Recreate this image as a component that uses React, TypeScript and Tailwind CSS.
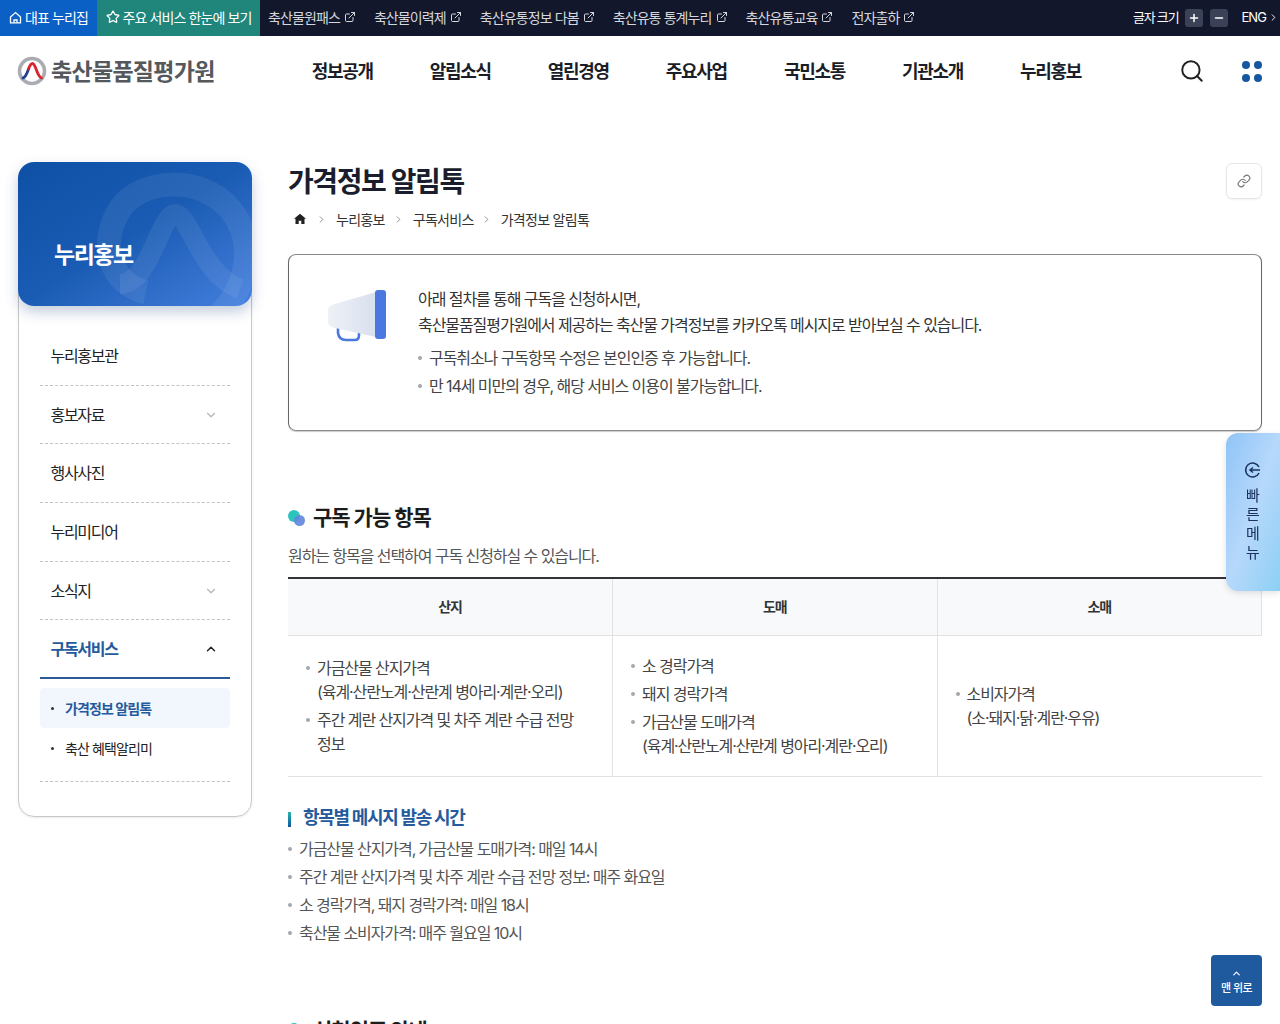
import { ChevronDown, ChevronRight, ChevronUp, ExternalLink, Link, Plus, Minus, Search, Star } from "lucide-react";

const font = "font-['Inter','Noto_Sans_CJK_KR',sans-serif]";

const topLinks = ["축산물원패스", "축산물이력제", "축산유통정보 다봄", "축산유통 통계누리", "축산유통교육", "전자출하"];
const navItems = ["정보공개", "알림소식", "열린경영", "주요사업", "국민소통", "기관소개", "누리홍보"];

const Logo = () => (
    <svg width="30" height="30" viewBox="0 0 30 30" fill="none">
        <circle cx="15" cy="15" r="12.5" stroke="#a9acb0" strokeWidth="3.6" />
        <path d="M6 22 C9 21 10 17 11.5 13" stroke="#233f94" strokeWidth="2.8" strokeLinecap="round" />
        <path d="M11.5 13 C13 9 14 7.500 15.500 7.500 C17 7.500 18 10 19.500 14 C21 18.500 22 21 24.500 22" stroke="#d8262f" strokeWidth="2.8" strokeLinecap="round" />
    </svg>
);

const Bullet = ({ children, top = "top-[10px]" }: { children: React.ReactNode; top?: string }) => (
    <li className="relative pl-[11px]">
        <span className={`absolute left-0 ${top} w-[4px] h-[4px] rounded-full bg-[#a3a8ae]`}></span>
        {children}
    </li>
);

const SectionTitle = ({ children, className }: { children: React.ReactNode; className: string }) => (
    <div className={`${className} flex items-center h-[32px]`}>
        <span className="relative w-[17px] h-[16px] mr-[8px]">
            <span className="absolute left-0 top-0 w-[12px] h-[12px] rounded-full bg-[#2cc5bd]"></span>
            <span className="absolute left-[6px] top-[5px] w-[11px] h-[11px] rounded-full bg-[#5f86dd]/90"></span>
        </span>
        <h3 className="text-[21px] font-bold text-[#1c1c1c] tracking-[-1px]">{children}</h3>
    </div>
);

const SideItem = ({ label, arrow }: { label: string; arrow?: boolean }) => (
    <div className="h-[58.7px] flex items-center justify-between pl-[10.5px] pr-[12px] border-b border-dashed border-[#c4c4c4] text-[16px] text-[#222] tracking-[-1.3px]">
        <span>{label}</span>
        {arrow && <ChevronDown size={14} strokeWidth={2} className="text-[#b5b5b5]" />}
    </div>
);

const Sidebar = () => (
    <aside className="w-[234px] shrink-0">
        <div className="relative h-[144px] rounded-[16px] overflow-hidden bg-gradient-to-br from-[#0d50a4] via-[#1a5cb4] to-[#4480df] shadow-[0_6px_14px_rgba(20,60,120,0.25)] z-10 flex items-center">
            <svg className="absolute left-[72px] top-[2px]" width="170" height="150" viewBox="0 0 170 150" fill="none">
                <path d="M56 128 C20 120 8 80 30 45 C50 15 110 10 140 45 C165 75 160 120 130 150" stroke="#ffffff" strokeOpacity="0.07" strokeWidth="24" />
                <path d="M30 120 C60 120 70 50 85 50 C100 50 110 110 150 125" stroke="#ffffff" strokeOpacity="0.07" strokeWidth="20" />
            </svg>
            <h2 className="relative pl-[36px] text-[23px] font-bold text-white tracking-[-1.5px] pt-[42px]">누리홍보</h2>
        </div>
        <div className="-mt-[14px] h-[525px] border border-[#c8c8c8] rounded-b-[16px] px-[21px] pt-[34px] shadow-[0_1px_2px_rgba(0,0,0,0.08)]">
            <SideItem label="누리홍보관" />
            <SideItem label="홍보자료" arrow />
            <SideItem label="행사사진" />
            <SideItem label="누리미디어" />
            <SideItem label="소식지" arrow />
            <div className="h-[58.7px] flex items-center justify-between pl-[10.5px] pr-[12px] border-b-2 border-[#2b5a97] text-[16px] font-bold text-[#255a9d] tracking-[-1.3px]">
                <span>구독서비스</span>
                <ChevronUp size={14} strokeWidth={2.5} className="text-[#222]" />
            </div>
            <ul className="pt-[9px] pb-[13px] border-b border-dashed border-[#c4c4c4] text-[14px] tracking-[-0.9px]">
                <li className="h-[40px] flex items-center gap-[11px] pl-[11px] bg-[#f2f7fd] rounded-[4px] font-bold text-[#255a9d]">
                    <span className="w-[3px] h-[3px] rounded-full bg-[#333]"></span>가격정보 알림톡
                </li>
                <li className="h-[40px] flex items-center gap-[11px] pl-[11px] text-[#222]">
                    <span className="w-[3px] h-[3px] rounded-full bg-[#333]"></span>축산 혜택알리미
                </li>
            </ul>
        </div>
    </aside>
);

const Megaphone = () => (
    <svg width="60" height="54" viewBox="0 0 60 54">
        <defs>
            <linearGradient id="horn" x1="0" y1="0" x2="1" y2="0">
                <stop offset="0" stopColor="#eef1f6" />
                <stop offset="1" stopColor="#d8e0ee" />
            </linearGradient>
        </defs>
        <path d="M10 38 L10 43 Q11 50 18 50 L27 50 Q31 50 31 45 L31 42" fill="none" stroke="#4a78e0" strokeWidth="2.6" strokeLinecap="round" />
        <path d="M7 14 L48 2 L48 47 L7 38 Q0 37 0 31 L0 20 Q0 15 7 14 Z" fill="url(#horn)" />
        <rect x="47" y="0" width="11" height="49" rx="3" fill="#4a78e0" />
    </svg>
);

const Main = () => (
    <main className="flex-1 min-w-0">
        <div className="flex justify-between items-start">
            <h1 className="mt-[2px] text-[28px] leading-[36px] font-bold text-[#1a1d2b] tracking-[-1.4px]">가격정보 알림톡</h1>
            <button className="mt-px w-[36px] h-[36px] rounded-[6px] border border-[#e6e6e6] flex items-center justify-center text-[#777] shadow-[0_1px_2px_rgba(0,0,0,0.05)]">
                <Link size={14} />
            </button>
        </div>
        <nav className="mt-[9px] flex items-center h-[20px] text-[14px] text-[#333] tracking-[-0.7px]">
            <svg width="12" height="12" viewBox="0 0 12 12" className="ml-[6px] mr-[10px]"><path d="M6 .8 L12 5.800 L10.500 5.800 L10.500 11 L7.300 11 L7.300 7.800 L4.700 7.800 L4.700 11 L1.500 11 L1.500 5.800 L0 5.800 Z" fill="#222" /></svg>
            <ChevronRight size={11} className="text-[#888] mr-[9px]" />
            <span>누리홍보</span>
            <ChevronRight size={11} className="text-[#888] ml-[8px] mr-[9px]" />
            <span>구독서비스</span>
            <ChevronRight size={11} className="text-[#888] ml-[7px] mr-[9px]" />
            <span>가격정보 알림톡</span>
        </nav>
        <section className="mt-[25px] h-[177px] rounded-[8px] border border-[#666] border-t-[#8a8a8a] border-b-[#8a8a8a] flex shadow-[0_1px_1px_rgba(0,0,0,0.2)]">
            <div className="w-[129px] shrink-0 pl-[39px] pt-[35px]"><Megaphone /></div>
            <div className="pt-[31px] text-[16px] leading-[26px] text-[#333] tracking-[-1.07px]">
                <p>아래 절차를 통해 구독을 신청하시면,</p>
                <p>축산물품질평가원에서 제공하는 축산물 가격정보를 카카오톡 메시지로 받아보실 수 있습니다.</p>
                <ul className="mt-[6px] leading-[28px] text-[#444]">
                    <Bullet top="top-[12px]">구독취소나 구독항목 수정은 본인인증 후 가능합니다.</Bullet>
                    <Bullet top="top-[12px]">만 14세 미만의 경우, 해당 서비스 이용이 불가능합니다.</Bullet>
                </ul>
            </div>
        </section>
        <SectionTitle className="mt-[71px]">구독 가능 항목</SectionTitle>
        <p className="mt-[9px] text-[16px] leading-[26px] text-[#555] tracking-[-1.07px]">원하는 항목을 선택하여 구독 신청하실 수 있습니다.</p>
        <table className="mt-[8px] w-full table-fixed border-t-2 border-[#333] text-[16px] tracking-[-1.07px] text-[#444]">
            <thead>
                <tr className="h-[57px] bg-[#f8f9fb] text-[14px] font-bold text-[#333] border-b border-[#e2e2e2]">
                    <th className="border-r border-[#e2e2e2]">산지</th>
                    <th className="border-r border-[#e2e2e2]">도매</th>
                    <th className="border-r border-[#e2e2e2]">소매</th>
                </tr>
            </thead>
            <tbody>
                <tr className="h-[141px] border-b border-[#e2e2e2] leading-[24px] break-keep">
                    <td className="border-r border-[#e2e2e2] pl-[18px] pr-[30px]">
                        <ul className="space-y-[4px]">
                            <Bullet>가금산물 산지가격<br />(육계·산란노계·산란계 병아리·계란·오리)</Bullet>
                            <Bullet>주간 계란 산지가격 및 차주 계란 수급 전망 정보</Bullet>
                        </ul>
                    </td>
                    <td className="border-r border-[#e2e2e2] pl-[18px] pr-[20px]">
                        <ul className="space-y-[4px]">
                            <Bullet>소 경락가격</Bullet>
                            <Bullet>돼지 경락가격</Bullet>
                            <Bullet>가금산물 도매가격<br />(육계·산란노계·산란계 병아리·계란·오리)</Bullet>
                        </ul>
                    </td>
                    <td className="pl-[18px] pr-[20px]">
                        <ul>
                            <Bullet>소비자가격<br />(소·돼지·닭·계란·우유)</Bullet>
                        </ul>
                    </td>
                </tr>
            </tbody>
        </table>
        <div className="mt-[27px] flex items-center h-[28px]">
            <span className="w-[3px] h-[15px] mt-[3px] bg-gradient-to-b from-[#2bb5a8] to-[#17569f] mr-[12px]"></span>
            <h4 className="text-[18px] font-bold text-[#255a9d] tracking-[-1.3px]">항목별 메시지 발송 시간</h4>
        </div>
        <ul className="mt-[3px] text-[16px] leading-[28px] text-[#555] tracking-[-1.07px]">
            <Bullet top="top-[12px]">가금산물 산지가격, 가금산물 도매가격: 매일 14시</Bullet>
            <Bullet top="top-[12px]">주간 계란 산지가격 및 차주 계란 수급 전망 정보: 매주 화요일</Bullet>
            <Bullet top="top-[12px]">소 경락가격, 돼지 경락가격: 매일 18시</Bullet>
            <Bullet top="top-[12px]">축산물 소비자가격: 매주 월요일 10시</Bullet>
        </ul>
        <SectionTitle className="mt-[68px]">신청인증 안내</SectionTitle>
    </main>
);

export default function App() {
    return (
        <div className={`${font} h-[1024px] overflow-hidden bg-white`}>
            <div className="h-[36px] bg-[#12172b] flex items-center text-[14px] tracking-[-0.9px]">
                <a className="h-full w-[97px] pb-[2px] bg-[#0a60c5] text-white flex items-center justify-center gap-[3px]">
                    <svg width="13" height="13" viewBox="0 0 13 13" fill="none" stroke="#fff" strokeWidth="1.300"><path d="M1.500 6 L6.500 1.500 L11.500 6 L11.500 11.800 L1.500 11.800 Z" /><path d="M5 11.800 V9 H8 V11.800" /></svg>
                    대표 누리집
                </a>
                <a className="h-full w-[163px] pb-[2px] bg-[#20857a] text-white flex items-center justify-center gap-[3px]">
                    <Star size={14} strokeWidth={2.2} />주요 서비스 한눈에 보기
                </a>
                <div className="flex items-center gap-[18px] pl-[8px] pb-[2px] text-[#d5d7dd]">
                    {topLinks.map((t) => (
                        <a key={t} className="flex items-center gap-[4px]">{t}<ExternalLink size={12} strokeWidth={2} /></a>
                    ))}
                </div>
                <div className="ml-auto flex items-center text-white pb-[1px] pr-[1px]">
                    <span className="text-[13px] tracking-[-1.2px] mr-[7px]">글자 크기</span>
                    <span className="w-[18px] h-[18px] rounded-[3px] bg-[#3b4257] flex items-center justify-center mr-[7px]"><Plus size={12} strokeWidth={3} /></span>
                    <span className="w-[18px] h-[18px] rounded-[3px] bg-[#3b4257] flex items-center justify-center mr-[13px]"><Minus size={12} strokeWidth={3} /></span>
                    <span className="text-[13px]">ENG</span>
                    <ChevronRight size={11} className="ml-[2px]" />
                </div>
            </div>
            <header className="h-[70px] flex items-center pl-[17px] pr-[18px]">
                <Logo />
                <span className="ml-[4px] mt-[2px] text-[23px] font-bold text-[#55585c] tracking-[-0.7px]">축산물품질평가원</span>
                <nav className="ml-[97px] flex gap-[57px] text-[18px] font-bold text-[#1b1e28] tracking-[-1.3px]">
                    {navItems.map((n) => <a key={n}>{n}</a>)}
                </nav>
                <div className="ml-auto flex items-center">
                    <Search size={26} strokeWidth={1.8} className="text-[#222] mr-[37px]" />
                    <div className="grid grid-cols-2 gap-x-[4px] gap-y-[5px]">
                        <span className="w-[8px] h-[8px] rounded-full bg-[#17579f]"></span>
                        <span className="w-[8px] h-[8px] rounded-full bg-[#17579f]"></span>
                        <span className="w-[8px] h-[8px] rounded-full bg-[#17579f]"></span>
                        <span className="w-[8px] h-[8px] rounded-full bg-[#17579f]"></span>
                    </div>
                </div>
            </header>
            <div className="flex gap-[36px] pl-[18px] pr-[18px] pt-[56px]">
                <Sidebar />
                <Main />
            </div>
            <div className="fixed right-0 top-[433px] w-[54px] h-[158px] rounded-l-[12px] bg-gradient-to-br from-[#8fc4f7] via-[#b6d8fb] to-[#8cd0f5] flex flex-col items-center pt-[29px] text-[#1a3260] text-[15px] leading-[19px] shadow-[0_2px_6px_rgba(0,0,0,0.12)]">
                <svg width="16" height="16" viewBox="0 0 16 16" fill="none" stroke="#1a3260" strokeWidth="1.500" className="mb-[8px]"><path d="M14 5 A7 7 0 1 0 14 11" /><path d="M5 8 H15 M8 5.500 L5 8 L8 10.500" /></svg>
                <span>빠</span><span>른</span><span>메</span><span>뉴</span>
            </div>
            <a className="fixed right-[18px] top-[955px] w-[51px] h-[51px] pt-[2px] rounded-[4px] bg-[#205a9e] flex flex-col items-center justify-center text-white text-[11px] font-medium tracking-[-0.6px] leading-[14px]">
                <ChevronUp size={11} strokeWidth={2.5} className="mb-[2px]" />맨 위로
            </a>
        </div>
    );
}
